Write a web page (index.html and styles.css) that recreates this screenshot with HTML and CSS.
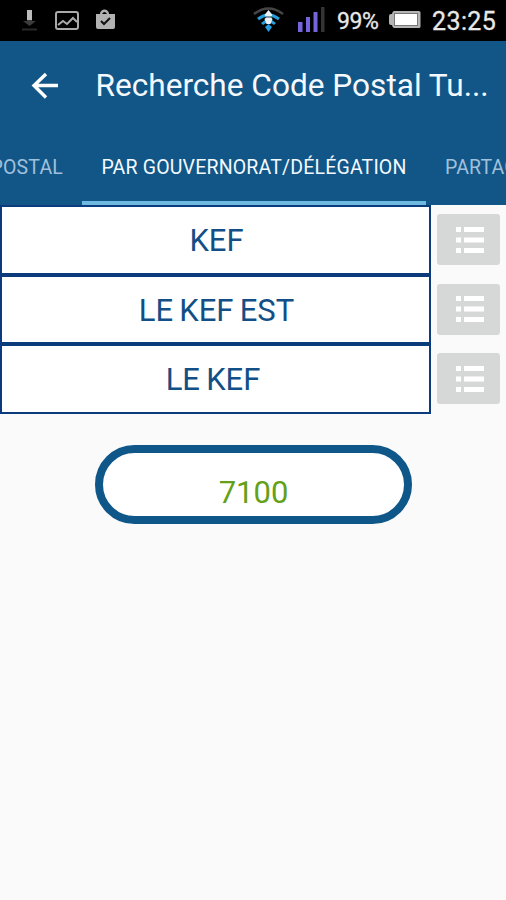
FILE: index.html
```html
<!DOCTYPE html>
<html lang="fr">
<head>
<meta charset="utf-8">
<title>Recherche Code Postal</title>
<link rel="stylesheet" href="styles.css">
</head>
<body>
<div class="status">
  <svg class="notices" width="130" height="41" viewBox="0 0 130 41">
    <path d="M27 10h5v11h4l-6.500 5-6.500-5h4z" fill="#3c3c3c"/>
    <path d="M27 10h5v10h-5z" fill="#bcbcbc"/>
    <path d="M22 29.500h15" stroke="#292929" stroke-width="2"/>
    <rect x="56" y="12" width="22" height="17" rx="2" fill="none" stroke="#aaa" stroke-width="2"/>
    <path d="M58 25l5-4 4 3 6-6 4 4" fill="none" stroke="#aaa" stroke-width="2"/>
    <path d="M96 14h4c0-6 9-6 9 0h6v13q0 2-2 2H98q-2 0-2-2z" fill="#b2b2b2"/>
    <path d="M102 14q2.500-4 5 0z" fill="#000"/>
    <path d="M101 21l3 3 6-6" fill="none" stroke="#111" stroke-width="2"/>
  </svg>
  <div class="system">
    <svg width="75" height="41" viewBox="250 0 75 41">
      <path d="M254 14q14.500-11 29 0" fill="none" stroke="#454545" stroke-width="2.500"/>
      <path d="M258 19q10.500-8 21 0M262 24q6.500-6 13 0" fill="none" stroke="#299edb" stroke-width="3"/>
      <path d="M268.500 10l4 5-2 2 2 2-2 5h-4l-2-5 2-2-2-2z" fill="#e8f3f7"/>
      <path d="M266 17h6" stroke="#567783" stroke-width="1.500"/>
      <path d="M265 27l3.500-3 3.500 3-3.500 5z" fill="#249ee2"/>
      <path d="M298 22h4.500v10H298zM306 17h4v15h-4zM313.500 12h4v20h-4z" fill="#7565dc"/>
      <path d="M321 7h3.500v25H321z" fill="#343434"/>
    </svg>
    <span class="percent">99%</span>
    <svg class="battery" width="34" height="41" viewBox="387 0 34 41">
      <path d="M394 11h25q1.500 0 1.500 1.500v14q0 1.500-1.500 1.500h-25q-1.500 0-2-3h-1q-2 0-2-2v-7q0-2 2-2h1q.5-3 2-3z" fill="#b4b4b4"/>
      <rect x="394.500" y="13.500" width="23" height="12" fill="#fff" stroke="#777"/>
    </svg>
    <span class="clock">23:25</span>
  </div>
</div>
<header>
  <div class="toolbar">
    <svg class="back" width="28" height="28" viewBox="31 71 28 28"><path d="M58 84.500H34M46 73L34 84.500l12 12" fill="none" stroke="#fff" stroke-width="3.400"/></svg>
    <h1>Recherche Code Postal Tu...</h1>
  </div>
  <nav>
    <div class="tab before"><span>POSTAL</span></div>
    <div class="tab active"><span>PAR GOUVERNORAT/DÉLÉGATION</span></div>
    <div class="tab after"><span>PARTAGER</span></div>
  </nav>
</header>
<main>
  <div class="row"><div class="field">KEF</div><button class="pick" aria-label="Liste"><svg width="28" height="26" viewBox="0 0 28 26"><path d="M0 0h5v5H0zm8 0h20v5H8zM0 10.500h5v5H0zm8 0h20v5H8zM0 21h5v5H0zm8 0h20v5H8z"/></svg></button></div>
  <div class="row"><div class="field">LE KEF EST</div><button class="pick" aria-label="Liste"><svg width="28" height="26" viewBox="0 0 28 26"><path d="M0 0h5v5H0zm8 0h20v5H8zM0 10.500h5v5H0zm8 0h20v5H8zM0 21h5v5H0zm8 0h20v5H8z"/></svg></button></div>
  <div class="row"><div class="field locality">LE KEF</div><button class="pick" aria-label="Liste"><svg width="28" height="26" viewBox="0 0 28 26"><path d="M0 0h5v5H0zm8 0h20v5H8zM0 10.500h5v5H0zm8 0h20v5H8zM0 21h5v5H0zm8 0h20v5H8z"/></svg></button></div>
  <div class="code">7100</div>
</main>
</body>
</html>
```
FILE: styles.css
```css
* { box-sizing: border-box; }
body { margin: 0; height: 900px; overflow: hidden; background: #fafafa; font-family: Roboto, sans-serif; }
svg { display: block; flex: none; }
.status { height: 41px; background: #000; display: flex; justify-content: space-between; color: #e8e8e8; }
.system { display: flex; width: 256px; line-height: 43px; white-space: nowrap; -webkit-text-stroke: .3px #e8e8e8; }
.percent { width: 50px; padding-left: 12px; font-size: 23px; letter-spacing: -.4px; }
.battery { margin-left: 12px; }
.clock { padding-left: 11px; font-size: 25px; letter-spacing: .4px; }
header { height: 164px; background: #115687; color: #f4f9ff; }
.toolbar { height: 89px; display: flex; align-items: center; padding-left: 31px; }
h1 { margin: 0 0 0 36.500px; font-size: 31.600px; line-height: 38px; font-weight: 400; white-space: nowrap; }
nav { height: 75px; display: flex; overflow: hidden; font-size: 19.5px; letter-spacing: .18px; line-height: 76px; white-space: nowrap; }
.tab { flex: none; }
.before { width: 82px; display: flex; justify-content: flex-end; padding-right: 19px; color: #a1c0db; }
.active { width: 344px; text-align: center; border-bottom: 4px solid #6eb9df; }
.after { width: 80px; padding-left: 19px; color: #a1c0db; }
.row { display: flex; height: 69.5px; }
.field { width: 431px; height: 69.5px; background: #fff; border: 2px solid #0b3b7c; line-height: 67px; font-size: 31px; word-spacing: -1.5px; text-align: center; color: #124f86; padding-left: 2px; }
.locality { padding: 0 5px 0 0; }
.pick { width: 63px; height: 51px; margin: 9px 0 0 6px; padding: 0 0 0 2px; border: 0; border-radius: 3px; background: #d6d8d7; display: flex; align-items: center; justify-content: center; }
.pick path { fill: #fff; }
.code { width: 317px; height: 79px; margin: 31.500px 0 0 95px; border: 8px solid #0f5689; border-radius: 40px; background: #fff; color: #64a018; font-size: 31px; line-height: 80px; text-align: center; }
```
